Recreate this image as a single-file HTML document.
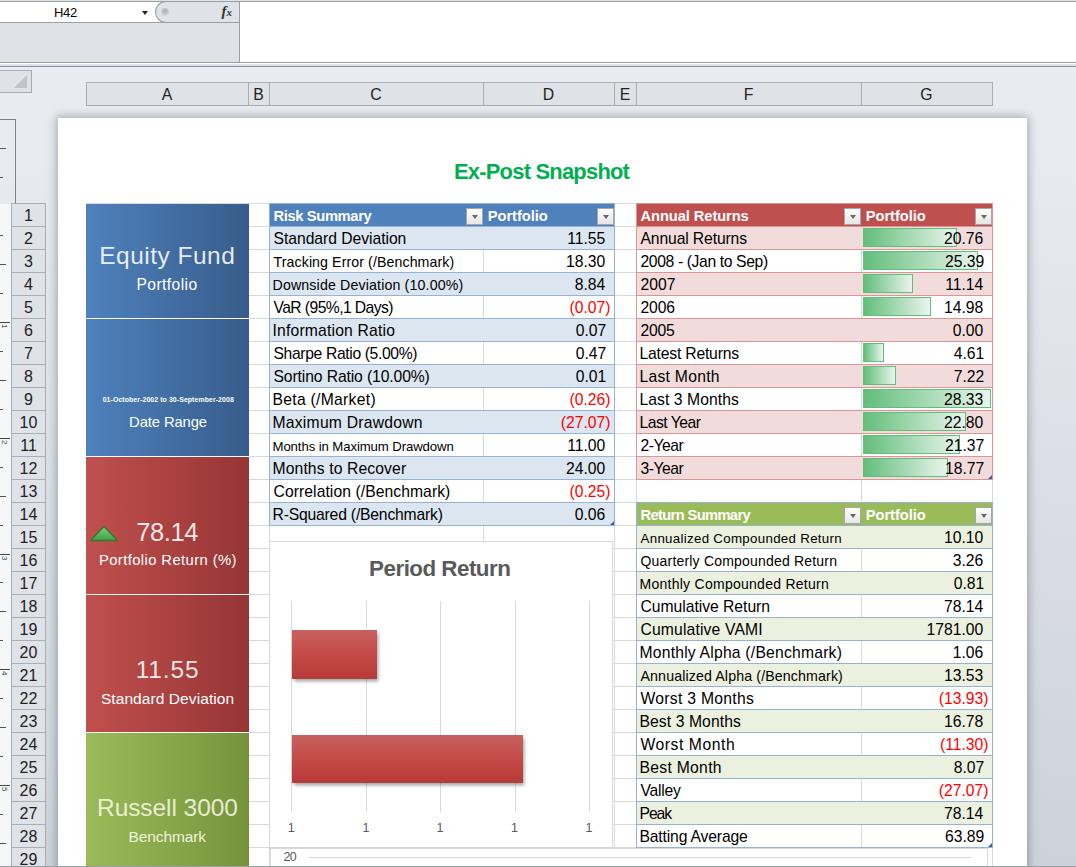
<!DOCTYPE html>
<html><head><meta charset="utf-8"><title>Ex-Post Snapshot</title>
<style>
*{margin:0;padding:0;box-sizing:border-box}
html,body{width:1076px;height:867px;overflow:hidden;background:linear-gradient(#e8ebf0 0px,#e8ebf0 140px,#cdd2d9 867px);font-family:"Liberation Sans",sans-serif;position:relative}
.a{position:absolute}
.t{position:absolute;white-space:nowrap;line-height:1}
.fb{position:absolute;width:17px;height:17px;border:1px solid #a6a6a6;background:linear-gradient(#ffffff,#e6e6e6)}
.fb:after{content:"";position:absolute;left:4.5px;top:6px;border-left:3.5px solid transparent;border-right:3.5px solid transparent;border-top:4.5px solid #666}
.rh{position:absolute;left:11px;width:35px;height:24px;border:1px solid #abafb4;background:#dfe2e7;font-size:16px;color:#222;text-align:center;line-height:23px}
</style></head><body>

<div class="a" style="left:0;top:0;width:1076px;height:1px;background:#dfe2e7"></div>
<div class="a" style="left:0;top:1px;width:1076px;height:1px;background:#9aa0a8"></div>
<div class="a" style="left:0;top:2px;width:1076px;height:60px;background:#ffffff"></div>
<div class="a" style="left:0;top:22px;width:239px;height:1px;background:#9aa0a8"></div>
<div class="a" style="left:0;top:23px;width:239px;height:39px;background:#dfe2e7"></div>
<div class="a" style="left:155px;top:1px;width:85px;height:22px;background:#dfe2e7;border:1px solid #9aa0a8;border-right:none;border-radius:11px 0 0 11px"></div>
<div class="a" style="left:161px;top:8px;width:8px;height:8px;border-radius:50%;background:radial-gradient(circle at 50% 35%,#a9adb3,#d2d5da 70%,#eef0f2)"></div>
<div class="t" style="left:221.5px;top:3.5px;font-family:'Liberation Serif',serif;font-style:italic;font-weight:bold;font-size:15px;color:#333">f<span style="font-size:11px">x</span></div>
<div class="a" style="left:239px;top:2px;width:1px;height:60px;background:#9aa0a8"></div>
<span style="position:absolute;left:54.00px;top:6.00px;letter-spacing:-0.309px;white-space:nowrap;line-height:1;font-family:'Liberation Sans',sans-serif;font-size:13px;font-weight:normal;color:#000;">H42</span>
<div class="a" style="left:142px;top:11px;border-left:3.5px solid transparent;border-right:3.5px solid transparent;border-top:4px solid #222"></div>
<div class="a" style="left:0;top:62px;width:1076px;height:1px;background:#9aa0a8"></div>
<div class="a" style="left:0;top:63px;width:1076px;height:1px;background:#ffffff"></div>
<div class="a" style="left:0;top:64px;width:1076px;height:2px;background:#dfe3f0"></div>
<div class="a" style="left:0;top:66px;width:1076px;height:1px;background:#888b90"></div>
<div class="a" style="left:0;top:67px;width:1076px;height:1px;background:#eef0f4"></div>
<div class="a" style="left:-1px;top:70px;width:33px;height:23px;border:1px solid #a9adb2;background:#dfe2e7"></div>
<div class="a" style="left:14px;top:75px;width:0;height:0;border-left:13px solid transparent;border-bottom:13px solid #c1c5c9"></div>
<div class="a" style="left:86px;top:82px;width:907px;height:24px;border:1px solid #abafb4;background:#dfe2e7"></div>
<div class="t" style="left:86px;width:162px;text-align:center;top:87px;font-size:15.8px;color:#222">A</div>
<div class="a" style="left:248px;top:82px;width:1px;height:24px;background:#abafb4"></div>
<div class="t" style="left:248px;width:21px;text-align:center;top:87px;font-size:15.8px;color:#222">B</div>
<div class="a" style="left:269px;top:82px;width:1px;height:24px;background:#abafb4"></div>
<div class="t" style="left:269px;width:214px;text-align:center;top:87px;font-size:15.8px;color:#222">C</div>
<div class="a" style="left:483px;top:82px;width:1px;height:24px;background:#abafb4"></div>
<div class="t" style="left:483px;width:131px;text-align:center;top:87px;font-size:15.8px;color:#222">D</div>
<div class="a" style="left:614px;top:82px;width:1px;height:24px;background:#abafb4"></div>
<div class="t" style="left:614px;width:22px;text-align:center;top:87px;font-size:15.8px;color:#222">E</div>
<div class="a" style="left:636px;top:82px;width:1px;height:24px;background:#abafb4"></div>
<div class="t" style="left:636px;width:225px;text-align:center;top:87px;font-size:15.8px;color:#222">F</div>
<div class="a" style="left:861px;top:82px;width:1px;height:24px;background:#abafb4"></div>
<div class="t" style="left:861px;width:131px;text-align:center;top:87px;font-size:15.8px;color:#222">G</div>
<div class="a" style="left:-1px;top:119px;width:17px;height:85px;border:1px solid #7d838a;border-bottom:none"></div>
<div class="a" style="left:0;top:204px;width:11px;height:663px;background:#f7f7f7"></div>
<div class="a" style="left:0;top:148px;width:6px;height:1px;background:#555"></div>
<div class="a" style="left:0;top:177px;width:3px;height:1px;background:#555"></div>
<div class="a" style="left:0;top:235px;width:3px;height:1px;background:#555"></div>
<div class="a" style="left:0;top:264px;width:6px;height:1px;background:#555"></div>
<div class="a" style="left:0;top:293px;width:3px;height:1px;background:#555"></div>
<div class="a" style="left:0;top:322px;width:10px;height:1px;background:#444"></div>
<div class="t" style="left:0;top:324px;width:8px;height:8px;font-size:8px;color:#444;transform:rotate(90deg);transform-origin:4px 4px">1</div>
<div class="a" style="left:0;top:351px;width:3px;height:1px;background:#555"></div>
<div class="a" style="left:0;top:380px;width:6px;height:1px;background:#555"></div>
<div class="a" style="left:0;top:409px;width:3px;height:1px;background:#555"></div>
<div class="a" style="left:0;top:438px;width:10px;height:1px;background:#444"></div>
<div class="t" style="left:0;top:440px;width:8px;height:8px;font-size:8px;color:#444;transform:rotate(90deg);transform-origin:4px 4px">2</div>
<div class="a" style="left:0;top:467px;width:3px;height:1px;background:#555"></div>
<div class="a" style="left:0;top:496px;width:6px;height:1px;background:#555"></div>
<div class="a" style="left:0;top:525px;width:3px;height:1px;background:#555"></div>
<div class="a" style="left:0;top:554px;width:10px;height:1px;background:#444"></div>
<div class="t" style="left:0;top:556px;width:8px;height:8px;font-size:8px;color:#444;transform:rotate(90deg);transform-origin:4px 4px">3</div>
<div class="a" style="left:0;top:582px;width:3px;height:1px;background:#555"></div>
<div class="a" style="left:0;top:611px;width:6px;height:1px;background:#555"></div>
<div class="a" style="left:0;top:640px;width:3px;height:1px;background:#555"></div>
<div class="a" style="left:0;top:669px;width:10px;height:1px;background:#444"></div>
<div class="t" style="left:0;top:671px;width:8px;height:8px;font-size:8px;color:#444;transform:rotate(90deg);transform-origin:4px 4px">4</div>
<div class="a" style="left:0;top:698px;width:3px;height:1px;background:#555"></div>
<div class="a" style="left:0;top:727px;width:6px;height:1px;background:#555"></div>
<div class="a" style="left:0;top:756px;width:3px;height:1px;background:#555"></div>
<div class="a" style="left:0;top:785px;width:10px;height:1px;background:#444"></div>
<div class="t" style="left:0;top:787px;width:8px;height:8px;font-size:8px;color:#444;transform:rotate(90deg);transform-origin:4px 4px">5</div>
<div class="a" style="left:0;top:814px;width:3px;height:1px;background:#555"></div>
<div class="a" style="left:0;top:843px;width:6px;height:1px;background:#555"></div>
<div class="rh" style="top:203px">1</div>
<div class="rh" style="top:226px">2</div>
<div class="rh" style="top:249px">3</div>
<div class="rh" style="top:272px">4</div>
<div class="rh" style="top:295px">5</div>
<div class="rh" style="top:318px">6</div>
<div class="rh" style="top:341px">7</div>
<div class="rh" style="top:364px">8</div>
<div class="rh" style="top:387px">9</div>
<div class="rh" style="top:410px">10</div>
<div class="rh" style="top:433px">11</div>
<div class="rh" style="top:456px">12</div>
<div class="rh" style="top:479px">13</div>
<div class="rh" style="top:502px">14</div>
<div class="rh" style="top:525px">15</div>
<div class="rh" style="top:548px">16</div>
<div class="rh" style="top:571px">17</div>
<div class="rh" style="top:594px">18</div>
<div class="rh" style="top:617px">19</div>
<div class="rh" style="top:640px">20</div>
<div class="rh" style="top:663px">21</div>
<div class="rh" style="top:686px">22</div>
<div class="rh" style="top:709px">23</div>
<div class="rh" style="top:732px">24</div>
<div class="rh" style="top:755px">25</div>
<div class="rh" style="top:778px">26</div>
<div class="rh" style="top:801px">27</div>
<div class="rh" style="top:824px">28</div>
<div class="rh" style="top:847px">29</div>
<div class="a" style="left:58px;top:118px;width:969px;height:760px;background:#fff;box-shadow:0 0 9px 1px rgba(95,100,110,0.55)"></div>
<div class="a" style="left:86px;top:203px;width:907px;height:1px;background:#d9d9d9"></div>
<div class="a" style="left:86px;top:226px;width:907px;height:1px;background:#d9d9d9"></div>
<div class="a" style="left:86px;top:249px;width:907px;height:1px;background:#d9d9d9"></div>
<div class="a" style="left:86px;top:272px;width:907px;height:1px;background:#d9d9d9"></div>
<div class="a" style="left:86px;top:295px;width:907px;height:1px;background:#d9d9d9"></div>
<div class="a" style="left:86px;top:318px;width:907px;height:1px;background:#d9d9d9"></div>
<div class="a" style="left:86px;top:341px;width:907px;height:1px;background:#d9d9d9"></div>
<div class="a" style="left:86px;top:364px;width:907px;height:1px;background:#d9d9d9"></div>
<div class="a" style="left:86px;top:387px;width:907px;height:1px;background:#d9d9d9"></div>
<div class="a" style="left:86px;top:410px;width:907px;height:1px;background:#d9d9d9"></div>
<div class="a" style="left:86px;top:433px;width:907px;height:1px;background:#d9d9d9"></div>
<div class="a" style="left:86px;top:456px;width:907px;height:1px;background:#d9d9d9"></div>
<div class="a" style="left:86px;top:479px;width:907px;height:1px;background:#d9d9d9"></div>
<div class="a" style="left:86px;top:502px;width:907px;height:1px;background:#d9d9d9"></div>
<div class="a" style="left:86px;top:525px;width:907px;height:1px;background:#d9d9d9"></div>
<div class="a" style="left:86px;top:548px;width:907px;height:1px;background:#d9d9d9"></div>
<div class="a" style="left:86px;top:571px;width:907px;height:1px;background:#d9d9d9"></div>
<div class="a" style="left:86px;top:594px;width:907px;height:1px;background:#d9d9d9"></div>
<div class="a" style="left:86px;top:617px;width:907px;height:1px;background:#d9d9d9"></div>
<div class="a" style="left:86px;top:640px;width:907px;height:1px;background:#d9d9d9"></div>
<div class="a" style="left:86px;top:663px;width:907px;height:1px;background:#d9d9d9"></div>
<div class="a" style="left:86px;top:686px;width:907px;height:1px;background:#d9d9d9"></div>
<div class="a" style="left:86px;top:709px;width:907px;height:1px;background:#d9d9d9"></div>
<div class="a" style="left:86px;top:732px;width:907px;height:1px;background:#d9d9d9"></div>
<div class="a" style="left:86px;top:755px;width:907px;height:1px;background:#d9d9d9"></div>
<div class="a" style="left:86px;top:778px;width:907px;height:1px;background:#d9d9d9"></div>
<div class="a" style="left:86px;top:801px;width:907px;height:1px;background:#d9d9d9"></div>
<div class="a" style="left:86px;top:824px;width:907px;height:1px;background:#d9d9d9"></div>
<div class="a" style="left:86px;top:847px;width:907px;height:1px;background:#d9d9d9"></div>
<div class="a" style="left:86px;top:203px;width:1px;height:664px;background:#d9d9d9"></div>
<div class="a" style="left:248px;top:203px;width:1px;height:664px;background:#d9d9d9"></div>
<div class="a" style="left:269px;top:203px;width:1px;height:664px;background:#d9d9d9"></div>
<div class="a" style="left:483px;top:203px;width:1px;height:664px;background:#d9d9d9"></div>
<div class="a" style="left:614px;top:203px;width:1px;height:664px;background:#d9d9d9"></div>
<div class="a" style="left:636px;top:203px;width:1px;height:664px;background:#d9d9d9"></div>
<div class="a" style="left:861px;top:203px;width:1px;height:664px;background:#d9d9d9"></div>
<div class="a" style="left:992px;top:203px;width:1px;height:664px;background:#d9d9d9"></div>
<span style="position:absolute;left:454.00px;top:160.76px;letter-spacing:-0.761px;white-space:nowrap;line-height:1;font-family:'Liberation Sans',sans-serif;font-size:21.9px;font-weight:bold;color:#00b050;">Ex-Post Snapshot</span>
<div class="a" style="left:86px;top:204px;width:163px;height:114px;background:linear-gradient(90deg,#4f81bd,#375c8b)"></div>
<div class="a" style="left:86px;top:319px;width:163px;height:137px;background:linear-gradient(90deg,#4f81bd,#375c8b)"></div>
<div class="a" style="left:86px;top:457px;width:163px;height:137px;background:linear-gradient(90deg,#c0504d,#963535)"></div>
<div class="a" style="left:86px;top:595px;width:163px;height:137px;background:linear-gradient(90deg,#c0504d,#963535)"></div>
<div class="a" style="left:86px;top:733px;width:163px;height:137px;background:linear-gradient(90deg,#9bbb59,#76933c)"></div>
<div class="a" style="left:86px;top:318px;width:163px;height:1px;background:#fff"></div>
<div class="a" style="left:86px;top:456px;width:163px;height:1px;background:#fff"></div>
<div class="a" style="left:86px;top:594px;width:163px;height:1px;background:#fff"></div>
<div class="a" style="left:86px;top:732px;width:163px;height:1px;background:#fff"></div>
<span style="position:absolute;left:99.30px;top:243.86px;letter-spacing:0.478px;white-space:nowrap;line-height:1;font-family:'Liberation Sans',sans-serif;font-size:24.5px;font-weight:normal;color:rgba(255,255,255,0.88);">Equity Fund</span>
<span style="position:absolute;left:136.50px;top:276.79px;letter-spacing:0.421px;white-space:nowrap;line-height:1;font-family:'Liberation Sans',sans-serif;font-size:15.6px;font-weight:normal;color:#ffffff;">Portfolio</span>
<span style="position:absolute;left:102.70px;top:397.46px;letter-spacing:0.100px;white-space:nowrap;line-height:1;font-family:'Liberation Sans',sans-serif;font-size:6.9px;font-weight:bold;color:#ffffff;">01-October-2002 to 30-September-2008</span>
<span style="position:absolute;left:129.10px;top:415.27px;letter-spacing:-0.116px;white-space:nowrap;line-height:1;font-family:'Liberation Sans',sans-serif;font-size:14.8px;font-weight:normal;color:#ffffff;">Date Range</span>
<svg class="a" style="left:89px;top:525px" width="31" height="17"><defs><linearGradient id="tg" x1="0" y1="0" x2="0" y2="1"><stop offset="0" stop-color="#7cc97c"/><stop offset="1" stop-color="#45a045"/></linearGradient></defs><polygon points="1.5,15.5 15,1.5 28.5,15.5" fill="url(#tg)" stroke="#2f7a2f" stroke-width="1.3" stroke-linejoin="round"/></svg>
<span style="position:absolute;left:136.20px;top:519.71px;letter-spacing:-0.408px;white-space:nowrap;line-height:1;font-family:'Liberation Sans',sans-serif;font-size:25.5px;font-weight:normal;color:rgba(255,255,255,0.88);">78.14</span>
<span style="position:absolute;left:98.90px;top:553.07px;letter-spacing:0.405px;white-space:nowrap;line-height:1;font-family:'Liberation Sans',sans-serif;font-size:14.8px;font-weight:normal;color:#ffffff;">Portfolio Return (%)</span>
<span style="position:absolute;left:135.70px;top:657.76px;letter-spacing:0.859px;white-space:nowrap;line-height:1;font-family:'Liberation Sans',sans-serif;font-size:24.5px;font-weight:normal;color:rgba(255,255,255,0.88);">11.55</span>
<span style="position:absolute;left:100.90px;top:690.88px;letter-spacing:0.082px;white-space:nowrap;line-height:1;font-family:'Liberation Sans',sans-serif;font-size:15.5px;font-weight:normal;color:#ffffff;">Standard Deviation</span>
<span style="position:absolute;left:97.00px;top:796.06px;letter-spacing:-0.065px;white-space:nowrap;line-height:1;font-family:'Liberation Sans',sans-serif;font-size:24.5px;font-weight:normal;color:rgba(250,252,235,0.85);">Russell 3000</span>
<span style="position:absolute;left:128.60px;top:828.68px;letter-spacing:-0.118px;white-space:nowrap;line-height:1;font-family:'Liberation Sans',sans-serif;font-size:15.5px;font-weight:normal;color:rgba(250,252,235,0.92);">Benchmark</span>
<div class="a" style="left:269px;top:203px;width:346px;height:24px;background:#4f81bd"></div>
<div class="a" style="left:269px;top:226px;width:346px;height:24px;background:#dce6f1"></div>
<div class="a" style="left:269px;top:249px;width:346px;height:24px;background:#ffffff"></div>
<div class="a" style="left:483px;top:250px;width:1px;height:22px;background:#d9d9d9"></div>
<div class="a" style="left:269px;top:272px;width:346px;height:24px;background:#dce6f1"></div>
<div class="a" style="left:269px;top:295px;width:346px;height:24px;background:#ffffff"></div>
<div class="a" style="left:483px;top:296px;width:1px;height:22px;background:#d9d9d9"></div>
<div class="a" style="left:269px;top:318px;width:346px;height:24px;background:#dce6f1"></div>
<div class="a" style="left:269px;top:341px;width:346px;height:24px;background:#ffffff"></div>
<div class="a" style="left:483px;top:342px;width:1px;height:22px;background:#d9d9d9"></div>
<div class="a" style="left:269px;top:364px;width:346px;height:24px;background:#dce6f1"></div>
<div class="a" style="left:269px;top:387px;width:346px;height:24px;background:#ffffff"></div>
<div class="a" style="left:483px;top:388px;width:1px;height:22px;background:#d9d9d9"></div>
<div class="a" style="left:269px;top:410px;width:346px;height:24px;background:#dce6f1"></div>
<div class="a" style="left:269px;top:433px;width:346px;height:24px;background:#ffffff"></div>
<div class="a" style="left:483px;top:434px;width:1px;height:22px;background:#d9d9d9"></div>
<div class="a" style="left:269px;top:456px;width:346px;height:24px;background:#dce6f1"></div>
<div class="a" style="left:269px;top:479px;width:346px;height:24px;background:#ffffff"></div>
<div class="a" style="left:483px;top:480px;width:1px;height:22px;background:#d9d9d9"></div>
<div class="a" style="left:269px;top:502px;width:346px;height:24px;background:#dce6f1"></div>
<div class="a" style="left:269px;top:203px;width:346px;height:1px;background:#95b3d7"></div>
<div class="a" style="left:269px;top:226px;width:346px;height:1px;background:#95b3d7"></div>
<div class="a" style="left:269px;top:249px;width:346px;height:1px;background:#95b3d7"></div>
<div class="a" style="left:269px;top:272px;width:346px;height:1px;background:#95b3d7"></div>
<div class="a" style="left:269px;top:295px;width:346px;height:1px;background:#95b3d7"></div>
<div class="a" style="left:269px;top:318px;width:346px;height:1px;background:#95b3d7"></div>
<div class="a" style="left:269px;top:341px;width:346px;height:1px;background:#95b3d7"></div>
<div class="a" style="left:269px;top:364px;width:346px;height:1px;background:#95b3d7"></div>
<div class="a" style="left:269px;top:387px;width:346px;height:1px;background:#95b3d7"></div>
<div class="a" style="left:269px;top:410px;width:346px;height:1px;background:#95b3d7"></div>
<div class="a" style="left:269px;top:433px;width:346px;height:1px;background:#95b3d7"></div>
<div class="a" style="left:269px;top:456px;width:346px;height:1px;background:#95b3d7"></div>
<div class="a" style="left:269px;top:479px;width:346px;height:1px;background:#95b3d7"></div>
<div class="a" style="left:269px;top:502px;width:346px;height:1px;background:#95b3d7"></div>
<div class="a" style="left:269px;top:525px;width:346px;height:1px;background:#95b3d7"></div>
<div class="a" style="left:269px;top:203px;width:1px;height:323px;background:#95b3d7"></div>
<div class="a" style="left:614px;top:203px;width:1px;height:323px;background:#95b3d7"></div>
<span style="position:absolute;left:273.50px;top:208.56px;letter-spacing:-0.352px;white-space:nowrap;line-height:1;font-family:'Liberation Sans',sans-serif;font-size:14.7px;font-weight:bold;color:#fff;">Risk Summary</span>
<span style="position:absolute;left:487.80px;top:208.56px;letter-spacing:-0.062px;white-space:nowrap;line-height:1;font-family:'Liberation Sans',sans-serif;font-size:14.7px;font-weight:bold;color:#fff;">Portfolio</span>
<div class="fb" style="left:466px;top:208px"></div>
<div class="fb" style="left:597px;top:208px"></div>
<div class="a" style="left:610px;top:521px;width:0;height:0;border-left:4px solid transparent;border-bottom:4px solid #3b5dab"></div>
<span style="position:absolute;left:273.50px;top:230.71px;letter-spacing:-0.035px;white-space:nowrap;line-height:1;font-family:'Liberation Sans',sans-serif;font-size:15.7px;font-weight:normal;color:#000;">Standard Deviation</span>
<span style="position:absolute;left:567.23px;top:230.71px;white-space:nowrap;line-height:1;font-family:'Liberation Sans',sans-serif;font-size:15.7px;font-weight:normal;color:#000;">11.55</span>
<span style="position:absolute;left:273.50px;top:254.98px;letter-spacing:0.088px;white-space:nowrap;line-height:1;font-family:'Liberation Sans',sans-serif;font-size:14.2px;font-weight:normal;color:#000;">Tracking Error (/Benchmark)</span>
<span style="position:absolute;left:566.07px;top:253.71px;white-space:nowrap;line-height:1;font-family:'Liberation Sans',sans-serif;font-size:15.7px;font-weight:normal;color:#000;">18.30</span>
<span style="position:absolute;left:272.50px;top:277.98px;letter-spacing:0.147px;white-space:nowrap;line-height:1;font-family:'Liberation Sans',sans-serif;font-size:14.2px;font-weight:normal;color:#000;">Downside Deviation (10.00%)</span>
<span style="position:absolute;left:574.79px;top:276.71px;white-space:nowrap;line-height:1;font-family:'Liberation Sans',sans-serif;font-size:15.7px;font-weight:normal;color:#000;">8.84</span>
<span style="position:absolute;left:273.50px;top:299.71px;letter-spacing:-0.588px;white-space:nowrap;line-height:1;font-family:'Liberation Sans',sans-serif;font-size:15.7px;font-weight:normal;color:#000;">VaR (95%,1 Days)</span>
<span style="position:absolute;left:569.54px;top:299.71px;white-space:nowrap;line-height:1;font-family:'Liberation Sans',sans-serif;font-size:15.7px;font-weight:normal;color:#ff0000;">(0.07)</span>
<span style="position:absolute;left:272.50px;top:322.71px;letter-spacing:0.186px;white-space:nowrap;line-height:1;font-family:'Liberation Sans',sans-serif;font-size:15.7px;font-weight:normal;color:#000;">Information Ratio</span>
<span style="position:absolute;left:575.79px;top:322.71px;white-space:nowrap;line-height:1;font-family:'Liberation Sans',sans-serif;font-size:15.7px;font-weight:normal;color:#000;">0.07</span>
<span style="position:absolute;left:273.50px;top:345.71px;letter-spacing:-0.359px;white-space:nowrap;line-height:1;font-family:'Liberation Sans',sans-serif;font-size:15.7px;font-weight:normal;color:#000;">Sharpe Ratio (5.00%)</span>
<span style="position:absolute;left:575.79px;top:345.71px;white-space:nowrap;line-height:1;font-family:'Liberation Sans',sans-serif;font-size:15.7px;font-weight:normal;color:#000;">0.47</span>
<span style="position:absolute;left:273.50px;top:368.71px;letter-spacing:-0.113px;white-space:nowrap;line-height:1;font-family:'Liberation Sans',sans-serif;font-size:15.7px;font-weight:normal;color:#000;">Sortino Ratio (10.00%)</span>
<span style="position:absolute;left:575.79px;top:368.71px;white-space:nowrap;line-height:1;font-family:'Liberation Sans',sans-serif;font-size:15.7px;font-weight:normal;color:#000;">0.01</span>
<span style="position:absolute;left:272.50px;top:391.71px;letter-spacing:0.288px;white-space:nowrap;line-height:1;font-family:'Liberation Sans',sans-serif;font-size:15.7px;font-weight:normal;color:#000;">Beta (/Market)</span>
<span style="position:absolute;left:569.54px;top:391.71px;white-space:nowrap;line-height:1;font-family:'Liberation Sans',sans-serif;font-size:15.7px;font-weight:normal;color:#ff0000;">(0.26)</span>
<span style="position:absolute;left:272.50px;top:414.71px;letter-spacing:0.238px;white-space:nowrap;line-height:1;font-family:'Liberation Sans',sans-serif;font-size:15.7px;font-weight:normal;color:#000;">Maximum Drawdown</span>
<span style="position:absolute;left:560.82px;top:414.71px;white-space:nowrap;line-height:1;font-family:'Liberation Sans',sans-serif;font-size:15.7px;font-weight:normal;color:#ff0000;">(27.07)</span>
<span style="position:absolute;left:272.50px;top:439.83px;letter-spacing:-0.105px;white-space:nowrap;line-height:1;font-family:'Liberation Sans',sans-serif;font-size:13.2px;font-weight:normal;color:#000;">Months in Maximum Drawdown</span>
<span style="position:absolute;left:567.23px;top:437.71px;white-space:nowrap;line-height:1;font-family:'Liberation Sans',sans-serif;font-size:15.7px;font-weight:normal;color:#000;">11.00</span>
<span style="position:absolute;left:272.50px;top:460.71px;letter-spacing:0.123px;white-space:nowrap;line-height:1;font-family:'Liberation Sans',sans-serif;font-size:15.7px;font-weight:normal;color:#000;">Months to Recover</span>
<span style="position:absolute;left:566.07px;top:460.71px;white-space:nowrap;line-height:1;font-family:'Liberation Sans',sans-serif;font-size:15.7px;font-weight:normal;color:#000;">24.00</span>
<span style="position:absolute;left:273.50px;top:483.71px;letter-spacing:0.069px;white-space:nowrap;line-height:1;font-family:'Liberation Sans',sans-serif;font-size:15.7px;font-weight:normal;color:#000;">Correlation (/Benchmark)</span>
<span style="position:absolute;left:569.54px;top:483.71px;white-space:nowrap;line-height:1;font-family:'Liberation Sans',sans-serif;font-size:15.7px;font-weight:normal;color:#ff0000;">(0.25)</span>
<span style="position:absolute;left:272.50px;top:506.71px;letter-spacing:-0.188px;white-space:nowrap;line-height:1;font-family:'Liberation Sans',sans-serif;font-size:15.7px;font-weight:normal;color:#000;">R-Squared (/Benchmark)</span>
<span style="position:absolute;left:574.79px;top:506.71px;white-space:nowrap;line-height:1;font-family:'Liberation Sans',sans-serif;font-size:15.7px;font-weight:normal;color:#000;">0.06</span>
<div class="a" style="left:636px;top:203px;width:357px;height:24px;background:#c0504d"></div>
<div class="a" style="left:636px;top:226px;width:357px;height:24px;background:#f2dcdb"></div>
<div class="a" style="left:636px;top:249px;width:357px;height:24px;background:#ffffff"></div>
<div class="a" style="left:861px;top:250px;width:1px;height:22px;background:#d9d9d9"></div>
<div class="a" style="left:636px;top:272px;width:357px;height:24px;background:#f2dcdb"></div>
<div class="a" style="left:636px;top:295px;width:357px;height:24px;background:#ffffff"></div>
<div class="a" style="left:861px;top:296px;width:1px;height:22px;background:#d9d9d9"></div>
<div class="a" style="left:636px;top:318px;width:357px;height:24px;background:#f2dcdb"></div>
<div class="a" style="left:636px;top:341px;width:357px;height:24px;background:#ffffff"></div>
<div class="a" style="left:861px;top:342px;width:1px;height:22px;background:#d9d9d9"></div>
<div class="a" style="left:636px;top:364px;width:357px;height:24px;background:#f2dcdb"></div>
<div class="a" style="left:636px;top:387px;width:357px;height:24px;background:#ffffff"></div>
<div class="a" style="left:861px;top:388px;width:1px;height:22px;background:#d9d9d9"></div>
<div class="a" style="left:636px;top:410px;width:357px;height:24px;background:#f2dcdb"></div>
<div class="a" style="left:636px;top:433px;width:357px;height:24px;background:#ffffff"></div>
<div class="a" style="left:861px;top:434px;width:1px;height:22px;background:#d9d9d9"></div>
<div class="a" style="left:636px;top:456px;width:357px;height:24px;background:#f2dcdb"></div>
<div class="a" style="left:636px;top:203px;width:357px;height:1px;background:#da9694"></div>
<div class="a" style="left:636px;top:226px;width:357px;height:1px;background:#da9694"></div>
<div class="a" style="left:636px;top:249px;width:357px;height:1px;background:#da9694"></div>
<div class="a" style="left:636px;top:272px;width:357px;height:1px;background:#da9694"></div>
<div class="a" style="left:636px;top:295px;width:357px;height:1px;background:#da9694"></div>
<div class="a" style="left:636px;top:318px;width:357px;height:1px;background:#da9694"></div>
<div class="a" style="left:636px;top:341px;width:357px;height:1px;background:#da9694"></div>
<div class="a" style="left:636px;top:364px;width:357px;height:1px;background:#da9694"></div>
<div class="a" style="left:636px;top:387px;width:357px;height:1px;background:#da9694"></div>
<div class="a" style="left:636px;top:410px;width:357px;height:1px;background:#da9694"></div>
<div class="a" style="left:636px;top:433px;width:357px;height:1px;background:#da9694"></div>
<div class="a" style="left:636px;top:456px;width:357px;height:1px;background:#da9694"></div>
<div class="a" style="left:636px;top:479px;width:357px;height:1px;background:#da9694"></div>
<div class="a" style="left:636px;top:203px;width:1px;height:277px;background:#da9694"></div>
<div class="a" style="left:992px;top:203px;width:1px;height:277px;background:#da9694"></div>
<span style="position:absolute;left:640.50px;top:208.56px;letter-spacing:-0.083px;white-space:nowrap;line-height:1;font-family:'Liberation Sans',sans-serif;font-size:14.7px;font-weight:bold;color:#fff;">Annual Returns</span>
<span style="position:absolute;left:865.80px;top:208.56px;letter-spacing:-0.062px;white-space:nowrap;line-height:1;font-family:'Liberation Sans',sans-serif;font-size:14.7px;font-weight:bold;color:#fff;">Portfolio</span>
<div class="fb" style="left:844px;top:208px"></div>
<div class="fb" style="left:975px;top:208px"></div>
<div class="a" style="left:988px;top:475px;width:0;height:0;border-left:4px solid transparent;border-bottom:4px solid #3b5dab"></div>
<div class="a" style="left:863px;top:228px;width:94px;height:19px;border:1px solid #63be7b;background:linear-gradient(90deg,#63be7b,#e9f5ec)"></div>
<div class="a" style="left:863px;top:251px;width:115px;height:19px;border:1px solid #63be7b;background:linear-gradient(90deg,#63be7b,#e9f5ec)"></div>
<div class="a" style="left:863px;top:274px;width:50px;height:19px;border:1px solid #63be7b;background:linear-gradient(90deg,#63be7b,#e9f5ec)"></div>
<div class="a" style="left:863px;top:297px;width:68px;height:19px;border:1px solid #63be7b;background:linear-gradient(90deg,#63be7b,#e9f5ec)"></div>
<div class="a" style="left:863px;top:343px;width:21px;height:19px;border:1px solid #63be7b;background:linear-gradient(90deg,#63be7b,#e9f5ec)"></div>
<div class="a" style="left:863px;top:366px;width:33px;height:19px;border:1px solid #63be7b;background:linear-gradient(90deg,#63be7b,#e9f5ec)"></div>
<div class="a" style="left:863px;top:389px;width:128px;height:19px;border:1px solid #63be7b;background:linear-gradient(90deg,#63be7b,#e9f5ec)"></div>
<div class="a" style="left:863px;top:412px;width:103px;height:19px;border:1px solid #63be7b;background:linear-gradient(90deg,#63be7b,#e9f5ec)"></div>
<div class="a" style="left:863px;top:435px;width:97px;height:19px;border:1px solid #63be7b;background:linear-gradient(90deg,#63be7b,#e9f5ec)"></div>
<div class="a" style="left:863px;top:458px;width:85px;height:19px;border:1px solid #63be7b;background:linear-gradient(90deg,#63be7b,#e9f5ec)"></div>
<span style="position:absolute;left:640.50px;top:230.71px;letter-spacing:-0.122px;white-space:nowrap;line-height:1;font-family:'Liberation Sans',sans-serif;font-size:15.7px;font-weight:normal;color:#000;">Annual Returns</span>
<span style="position:absolute;left:944.07px;top:230.71px;white-space:nowrap;line-height:1;font-family:'Liberation Sans',sans-serif;font-size:15.7px;font-weight:normal;color:#000;">20.76</span>
<span style="position:absolute;left:640.50px;top:253.71px;letter-spacing:-0.371px;white-space:nowrap;line-height:1;font-family:'Liberation Sans',sans-serif;font-size:15.7px;font-weight:normal;color:#000;">2008 - (Jan to Sep)</span>
<span style="position:absolute;left:945.07px;top:253.71px;white-space:nowrap;line-height:1;font-family:'Liberation Sans',sans-serif;font-size:15.7px;font-weight:normal;color:#000;">25.39</span>
<span style="position:absolute;left:640.50px;top:276.71px;letter-spacing:0.009px;white-space:nowrap;line-height:1;font-family:'Liberation Sans',sans-serif;font-size:15.7px;font-weight:normal;color:#000;">2007</span>
<span style="position:absolute;left:945.23px;top:276.71px;white-space:nowrap;line-height:1;font-family:'Liberation Sans',sans-serif;font-size:15.7px;font-weight:normal;color:#000;">11.14</span>
<span style="position:absolute;left:640.50px;top:299.71px;letter-spacing:-0.158px;white-space:nowrap;line-height:1;font-family:'Liberation Sans',sans-serif;font-size:15.7px;font-weight:normal;color:#000;">2006</span>
<span style="position:absolute;left:944.07px;top:299.71px;white-space:nowrap;line-height:1;font-family:'Liberation Sans',sans-serif;font-size:15.7px;font-weight:normal;color:#000;">14.98</span>
<span style="position:absolute;left:640.50px;top:322.71px;letter-spacing:-0.225px;white-space:nowrap;line-height:1;font-family:'Liberation Sans',sans-serif;font-size:15.7px;font-weight:normal;color:#000;">2005</span>
<span style="position:absolute;left:952.79px;top:322.71px;white-space:nowrap;line-height:1;font-family:'Liberation Sans',sans-serif;font-size:15.7px;font-weight:normal;color:#000;">0.00</span>
<span style="position:absolute;left:639.50px;top:345.71px;letter-spacing:-0.191px;white-space:nowrap;line-height:1;font-family:'Liberation Sans',sans-serif;font-size:15.7px;font-weight:normal;color:#000;">Latest Returns</span>
<span style="position:absolute;left:953.79px;top:345.71px;white-space:nowrap;line-height:1;font-family:'Liberation Sans',sans-serif;font-size:15.7px;font-weight:normal;color:#000;">4.61</span>
<span style="position:absolute;left:639.50px;top:368.71px;letter-spacing:0.268px;white-space:nowrap;line-height:1;font-family:'Liberation Sans',sans-serif;font-size:15.7px;font-weight:normal;color:#000;">Last Month</span>
<span style="position:absolute;left:953.79px;top:368.71px;white-space:nowrap;line-height:1;font-family:'Liberation Sans',sans-serif;font-size:15.7px;font-weight:normal;color:#000;">7.22</span>
<span style="position:absolute;left:639.50px;top:391.71px;letter-spacing:0.067px;white-space:nowrap;line-height:1;font-family:'Liberation Sans',sans-serif;font-size:15.7px;font-weight:normal;color:#000;">Last 3 Months</span>
<span style="position:absolute;left:944.07px;top:391.71px;white-space:nowrap;line-height:1;font-family:'Liberation Sans',sans-serif;font-size:15.7px;font-weight:normal;color:#000;">28.33</span>
<span style="position:absolute;left:639.50px;top:414.71px;letter-spacing:-0.485px;white-space:nowrap;line-height:1;font-family:'Liberation Sans',sans-serif;font-size:15.7px;font-weight:normal;color:#000;">Last Year</span>
<span style="position:absolute;left:944.07px;top:414.71px;white-space:nowrap;line-height:1;font-family:'Liberation Sans',sans-serif;font-size:15.7px;font-weight:normal;color:#000;">22.80</span>
<span style="position:absolute;left:640.50px;top:437.71px;letter-spacing:-0.484px;white-space:nowrap;line-height:1;font-family:'Liberation Sans',sans-serif;font-size:15.7px;font-weight:normal;color:#000;">2-Year</span>
<span style="position:absolute;left:945.07px;top:437.71px;white-space:nowrap;line-height:1;font-family:'Liberation Sans',sans-serif;font-size:15.7px;font-weight:normal;color:#000;">21.37</span>
<span style="position:absolute;left:640.50px;top:460.71px;letter-spacing:-0.484px;white-space:nowrap;line-height:1;font-family:'Liberation Sans',sans-serif;font-size:15.7px;font-weight:normal;color:#000;">3-Year</span>
<span style="position:absolute;left:945.07px;top:460.71px;white-space:nowrap;line-height:1;font-family:'Liberation Sans',sans-serif;font-size:15.7px;font-weight:normal;color:#000;">18.77</span>
<div class="a" style="left:636px;top:502px;width:357px;height:24px;background:#9bbb59"></div>
<div class="a" style="left:636px;top:525px;width:357px;height:24px;background:#ebf1de"></div>
<div class="a" style="left:636px;top:548px;width:357px;height:24px;background:#ffffff"></div>
<div class="a" style="left:861px;top:549px;width:1px;height:22px;background:#d9d9d9"></div>
<div class="a" style="left:636px;top:571px;width:357px;height:24px;background:#ebf1de"></div>
<div class="a" style="left:636px;top:594px;width:357px;height:24px;background:#ffffff"></div>
<div class="a" style="left:861px;top:595px;width:1px;height:22px;background:#d9d9d9"></div>
<div class="a" style="left:636px;top:617px;width:357px;height:24px;background:#ebf1de"></div>
<div class="a" style="left:636px;top:640px;width:357px;height:24px;background:#ffffff"></div>
<div class="a" style="left:861px;top:641px;width:1px;height:22px;background:#d9d9d9"></div>
<div class="a" style="left:636px;top:663px;width:357px;height:24px;background:#ebf1de"></div>
<div class="a" style="left:636px;top:686px;width:357px;height:24px;background:#ffffff"></div>
<div class="a" style="left:861px;top:687px;width:1px;height:22px;background:#d9d9d9"></div>
<div class="a" style="left:636px;top:709px;width:357px;height:24px;background:#ebf1de"></div>
<div class="a" style="left:636px;top:732px;width:357px;height:24px;background:#ffffff"></div>
<div class="a" style="left:861px;top:733px;width:1px;height:22px;background:#d9d9d9"></div>
<div class="a" style="left:636px;top:755px;width:357px;height:24px;background:#ebf1de"></div>
<div class="a" style="left:636px;top:778px;width:357px;height:24px;background:#ffffff"></div>
<div class="a" style="left:861px;top:779px;width:1px;height:22px;background:#d9d9d9"></div>
<div class="a" style="left:636px;top:801px;width:357px;height:24px;background:#ebf1de"></div>
<div class="a" style="left:636px;top:824px;width:357px;height:24px;background:#ffffff"></div>
<div class="a" style="left:861px;top:825px;width:1px;height:22px;background:#d9d9d9"></div>
<div class="a" style="left:636px;top:502px;width:357px;height:1px;background:#95b3d7"></div>
<div class="a" style="left:636px;top:525px;width:357px;height:1px;background:#95b3d7"></div>
<div class="a" style="left:636px;top:548px;width:357px;height:1px;background:#95b3d7"></div>
<div class="a" style="left:636px;top:571px;width:357px;height:1px;background:#95b3d7"></div>
<div class="a" style="left:636px;top:594px;width:357px;height:1px;background:#95b3d7"></div>
<div class="a" style="left:636px;top:617px;width:357px;height:1px;background:#95b3d7"></div>
<div class="a" style="left:636px;top:640px;width:357px;height:1px;background:#95b3d7"></div>
<div class="a" style="left:636px;top:663px;width:357px;height:1px;background:#95b3d7"></div>
<div class="a" style="left:636px;top:686px;width:357px;height:1px;background:#95b3d7"></div>
<div class="a" style="left:636px;top:709px;width:357px;height:1px;background:#95b3d7"></div>
<div class="a" style="left:636px;top:732px;width:357px;height:1px;background:#95b3d7"></div>
<div class="a" style="left:636px;top:755px;width:357px;height:1px;background:#95b3d7"></div>
<div class="a" style="left:636px;top:778px;width:357px;height:1px;background:#95b3d7"></div>
<div class="a" style="left:636px;top:801px;width:357px;height:1px;background:#95b3d7"></div>
<div class="a" style="left:636px;top:824px;width:357px;height:1px;background:#95b3d7"></div>
<div class="a" style="left:636px;top:847px;width:357px;height:1px;background:#95b3d7"></div>
<div class="a" style="left:636px;top:502px;width:1px;height:346px;background:#95b3d7"></div>
<div class="a" style="left:992px;top:502px;width:1px;height:346px;background:#95b3d7"></div>
<span style="position:absolute;left:640.50px;top:507.56px;letter-spacing:-0.629px;white-space:nowrap;line-height:1;font-family:'Liberation Sans',sans-serif;font-size:14.7px;font-weight:bold;color:#fff;">Return Summary</span>
<span style="position:absolute;left:865.80px;top:507.56px;letter-spacing:-0.062px;white-space:nowrap;line-height:1;font-family:'Liberation Sans',sans-serif;font-size:14.7px;font-weight:bold;color:#fff;">Portfolio</span>
<div class="fb" style="left:844px;top:507px"></div>
<div class="fb" style="left:975px;top:507px"></div>
<div class="a" style="left:988px;top:843px;width:0;height:0;border-left:4px solid transparent;border-bottom:4px solid #3b5dab"></div>
<span style="position:absolute;left:640.50px;top:531.74px;letter-spacing:0.306px;white-space:nowrap;line-height:1;font-family:'Liberation Sans',sans-serif;font-size:13.3px;font-weight:normal;color:#000;">Annualized Compounded Return</span>
<span style="position:absolute;left:944.07px;top:529.71px;white-space:nowrap;line-height:1;font-family:'Liberation Sans',sans-serif;font-size:15.7px;font-weight:normal;color:#000;">10.10</span>
<span style="position:absolute;left:640.50px;top:554.15px;letter-spacing:0.194px;white-space:nowrap;line-height:1;font-family:'Liberation Sans',sans-serif;font-size:14px;font-weight:normal;color:#000;">Quarterly Compounded Return</span>
<span style="position:absolute;left:952.79px;top:552.71px;white-space:nowrap;line-height:1;font-family:'Liberation Sans',sans-serif;font-size:15.7px;font-weight:normal;color:#000;">3.26</span>
<span style="position:absolute;left:639.50px;top:577.15px;letter-spacing:0.267px;white-space:nowrap;line-height:1;font-family:'Liberation Sans',sans-serif;font-size:14px;font-weight:normal;color:#000;">Monthly Compounded Return</span>
<span style="position:absolute;left:953.79px;top:575.71px;white-space:nowrap;line-height:1;font-family:'Liberation Sans',sans-serif;font-size:15.7px;font-weight:normal;color:#000;">0.81</span>
<span style="position:absolute;left:640.50px;top:598.71px;letter-spacing:-0.024px;white-space:nowrap;line-height:1;font-family:'Liberation Sans',sans-serif;font-size:15.7px;font-weight:normal;color:#000;">Cumulative Return</span>
<span style="position:absolute;left:944.07px;top:598.71px;white-space:nowrap;line-height:1;font-family:'Liberation Sans',sans-serif;font-size:15.7px;font-weight:normal;color:#000;">78.14</span>
<span style="position:absolute;left:640.50px;top:621.71px;letter-spacing:0.146px;white-space:nowrap;line-height:1;font-family:'Liberation Sans',sans-serif;font-size:15.7px;font-weight:normal;color:#000;">Cumulative VAMI</span>
<span style="position:absolute;left:926.62px;top:621.71px;white-space:nowrap;line-height:1;font-family:'Liberation Sans',sans-serif;font-size:15.7px;font-weight:normal;color:#000;">1781.00</span>
<span style="position:absolute;left:639.50px;top:644.71px;letter-spacing:0.212px;white-space:nowrap;line-height:1;font-family:'Liberation Sans',sans-serif;font-size:15.7px;font-weight:normal;color:#000;">Monthly Alpha (/Benchmark)</span>
<span style="position:absolute;left:952.79px;top:644.71px;white-space:nowrap;line-height:1;font-family:'Liberation Sans',sans-serif;font-size:15.7px;font-weight:normal;color:#000;">1.06</span>
<span style="position:absolute;left:640.50px;top:668.98px;letter-spacing:0.129px;white-space:nowrap;line-height:1;font-family:'Liberation Sans',sans-serif;font-size:14.2px;font-weight:normal;color:#000;">Annualized Alpha (/Benchmark)</span>
<span style="position:absolute;left:944.07px;top:667.71px;white-space:nowrap;line-height:1;font-family:'Liberation Sans',sans-serif;font-size:15.7px;font-weight:normal;color:#000;">13.53</span>
<span style="position:absolute;left:640.50px;top:690.71px;letter-spacing:0.283px;white-space:nowrap;line-height:1;font-family:'Liberation Sans',sans-serif;font-size:15.7px;font-weight:normal;color:#000;">Worst 3 Months</span>
<span style="position:absolute;left:938.82px;top:690.71px;white-space:nowrap;line-height:1;font-family:'Liberation Sans',sans-serif;font-size:15.7px;font-weight:normal;color:#ff0000;">(13.93)</span>
<span style="position:absolute;left:639.50px;top:713.71px;letter-spacing:0.089px;white-space:nowrap;line-height:1;font-family:'Liberation Sans',sans-serif;font-size:15.7px;font-weight:normal;color:#000;">Best 3 Months</span>
<span style="position:absolute;left:944.07px;top:713.71px;white-space:nowrap;line-height:1;font-family:'Liberation Sans',sans-serif;font-size:15.7px;font-weight:normal;color:#000;">16.78</span>
<span style="position:absolute;left:640.50px;top:736.71px;letter-spacing:0.549px;white-space:nowrap;line-height:1;font-family:'Liberation Sans',sans-serif;font-size:15.7px;font-weight:normal;color:#000;">Worst Month</span>
<span style="position:absolute;left:939.98px;top:736.71px;white-space:nowrap;line-height:1;font-family:'Liberation Sans',sans-serif;font-size:15.7px;font-weight:normal;color:#ff0000;">(11.30)</span>
<span style="position:absolute;left:639.50px;top:759.71px;letter-spacing:0.297px;white-space:nowrap;line-height:1;font-family:'Liberation Sans',sans-serif;font-size:15.7px;font-weight:normal;color:#000;">Best Month</span>
<span style="position:absolute;left:953.79px;top:759.71px;white-space:nowrap;line-height:1;font-family:'Liberation Sans',sans-serif;font-size:15.7px;font-weight:normal;color:#000;">8.07</span>
<span style="position:absolute;left:640.50px;top:782.71px;letter-spacing:-0.244px;white-space:nowrap;line-height:1;font-family:'Liberation Sans',sans-serif;font-size:15.7px;font-weight:normal;color:#000;">Valley</span>
<span style="position:absolute;left:938.82px;top:782.71px;white-space:nowrap;line-height:1;font-family:'Liberation Sans',sans-serif;font-size:15.7px;font-weight:normal;color:#ff0000;">(27.07)</span>
<span style="position:absolute;left:639.50px;top:805.71px;letter-spacing:-1.071px;white-space:nowrap;line-height:1;font-family:'Liberation Sans',sans-serif;font-size:15.7px;font-weight:normal;color:#000;">Peak</span>
<span style="position:absolute;left:944.07px;top:805.71px;white-space:nowrap;line-height:1;font-family:'Liberation Sans',sans-serif;font-size:15.7px;font-weight:normal;color:#000;">78.14</span>
<span style="position:absolute;left:639.50px;top:828.71px;letter-spacing:-0.159px;white-space:nowrap;line-height:1;font-family:'Liberation Sans',sans-serif;font-size:15.7px;font-weight:normal;color:#000;">Batting Average</span>
<span style="position:absolute;left:945.07px;top:828.71px;white-space:nowrap;line-height:1;font-family:'Liberation Sans',sans-serif;font-size:15.7px;font-weight:normal;color:#000;">63.89</span>
<div class="a" style="left:269px;top:541px;width:344px;height:308px;background:#fff;border:1px solid #d9d9d9;border-bottom:2px solid #d4d4d4"></div>
<span style="position:absolute;left:369.10px;top:557.64px;letter-spacing:-0.522px;white-space:nowrap;line-height:1;font-family:'Liberation Sans',sans-serif;font-size:22.4px;font-weight:bold;color:#595959;">Period Return</span>
<div class="a" style="left:291px;top:601px;width:1px;height:211px;background:#d9d9d9"></div>
<div class="a" style="left:366px;top:601px;width:1px;height:211px;background:#d9d9d9"></div>
<div class="a" style="left:440px;top:601px;width:1px;height:211px;background:#d9d9d9"></div>
<div class="a" style="left:515px;top:601px;width:1px;height:211px;background:#d9d9d9"></div>
<div class="a" style="left:589px;top:601px;width:1px;height:211px;background:#d9d9d9"></div>
<span style="position:absolute;left:287.80px;top:822.42px;white-space:nowrap;line-height:1;font-family:'Liberation Sans',sans-serif;font-size:12.5px;font-weight:normal;color:#595959;">1</span>
<span style="position:absolute;left:362.40px;top:822.42px;white-space:nowrap;line-height:1;font-family:'Liberation Sans',sans-serif;font-size:12.5px;font-weight:normal;color:#595959;">1</span>
<span style="position:absolute;left:436.60px;top:822.42px;white-space:nowrap;line-height:1;font-family:'Liberation Sans',sans-serif;font-size:12.5px;font-weight:normal;color:#595959;">1</span>
<span style="position:absolute;left:511.00px;top:822.42px;white-space:nowrap;line-height:1;font-family:'Liberation Sans',sans-serif;font-size:12.5px;font-weight:normal;color:#595959;">1</span>
<span style="position:absolute;left:585.40px;top:822.42px;white-space:nowrap;line-height:1;font-family:'Liberation Sans',sans-serif;font-size:12.5px;font-weight:normal;color:#595959;">1</span>
<div class="a" style="left:292px;top:630px;width:85px;height:49px;background:linear-gradient(#c6625e,#c44b47 50%,#b63a37);box-shadow:1.5px 2.5px 3.5px rgba(20,30,30,0.42)"></div>
<div class="a" style="left:292px;top:735px;width:231px;height:48px;background:linear-gradient(#c6625e,#c44b47 50%,#b63a37);box-shadow:1.5px 2.5px 3.5px rgba(20,30,30,0.42)"></div>
<div class="a" style="left:270px;top:848px;width:718px;height:30px;background:#fff;border:1px solid #d9d9d9"></div>
<span style="position:absolute;left:283.60px;top:851.22px;letter-spacing:-0.752px;white-space:nowrap;line-height:1;font-family:'Liberation Sans',sans-serif;font-size:12.5px;font-weight:normal;color:#595959;">20</span>
<div class="a" style="left:309px;top:857px;width:662px;height:1px;background:#d9d9d9"></div>
<div class="a" style="left:0;top:866px;width:1076px;height:1px;background:#9aa0a8"></div>
</body></html>
